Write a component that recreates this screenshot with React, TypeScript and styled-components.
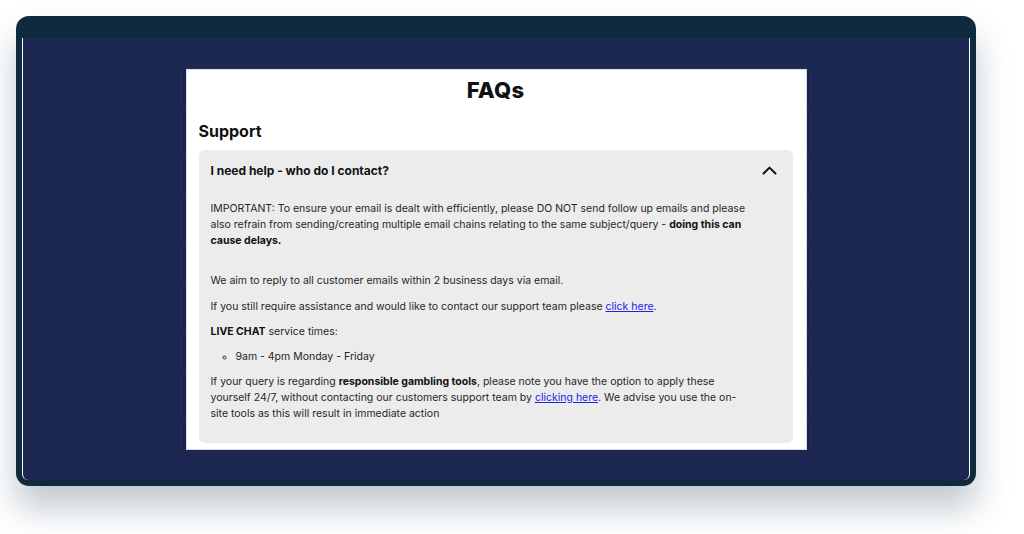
import React from 'react'
import styled, { createGlobalStyle } from 'styled-components'

const GlobalStyle = createGlobalStyle`
  * { box-sizing: border-box; }
  body {
    margin: 0;
    background: #ffffff;
    font-family: Inter, "Noto Sans", sans-serif;
    color: #1c1c1c;
  }
`

const Stage = styled.div`
  width: 1024px;
  height: 534px;
  padding: 16px 48px 48px 16px;
  background: #ffffff;
`

const Window = styled.div`
  height: 470px;
  display: flex;
  flex-direction: column;
  background: #0f2a3f;
  border-radius: 13px;
  padding: 22px 6px 6px 6px;
  box-shadow: 0 22px 34px rgba(30, 60, 85, 0.28);
`

const Screen = styled.div`
  flex: 1;
  position: relative;
  background: #1d2852;
  border-left: 1px solid #ffffff;
  border-right: 1px solid #ffffff;
  border-bottom-left-radius: 6px;
  border-bottom-right-radius: 6px;
  overflow: hidden;
`

const Backdrop = styled.div`
  width: 630px;
  height: 381px;
  margin: 30px auto 0;
  display: flex;
  flex-direction: column;
  gap: 4px;
  overflow: hidden;
`

const BackdropRow = styled.div`
  flex: none;
  height: 40px;
  background: #18224a;
  border: 1px solid #25315e;
  border-radius: 2px;
`

const Overlay = styled.div`
  position: absolute;
  inset: 0;
  display: flex;
  align-items: center;
  justify-content: center;
`

const Modal = styled.div`
  width: 621px;
  height: 381px;
  background: #ffffff;
  border: 1px solid #d9dbe3;
  padding: 6px 13px 0 12px;
  overflow: hidden;
`

const Title = styled.h1`
  margin: 0;
  text-align: center;
  font-size: 22px;
  font-weight: 800;
  line-height: 28px;
  letter-spacing: 0.2px;
  color: #111;
`

const Section = styled.h2`
  margin: 16px 0 0;
  font-size: 16px;
  font-weight: 700;
  line-height: 22px;
  color: #111;
`

const Panel = styled.div`
  margin-top: 8px;
  background: #ececec;
  border-radius: 6px;
  padding: 0 12px 21px;
`

const Question = styled.div`
  height: 42px;
  display: flex;
  align-items: center;
  justify-content: space-between;
  font-size: 12px;
  font-weight: 700;
  color: #111;
  padding-right: 4px;
`

const Answer = styled.div`
  max-width: 540px;
  padding-top: 9px;
  font-size: 10.5px;
  line-height: 16px;
  color: #262626;
`

const Para = styled.p<{ $gap?: number }>`
  margin: 0 0 ${(p) => p.$gap ?? 9}px;
`

const Strong = styled.strong`
  font-weight: 700;
  color: #111;
`

const TextLink = styled.a`
  color: #2323e8;
  text-decoration: underline;
`

const Times = styled.ul`
  margin: 0 0 9px;
  padding-left: 25px;
  list-style: circle;
`

const Chevron = () => (
  <svg width="15" height="9" viewBox="0 0 15 9" fill="none">
    <polyline
      points="1.5,7.5 7.5,1.6 13.5,7.5"
      stroke="#111"
      strokeWidth="2"
      strokeLinecap="round"
      strokeLinejoin="round"
    />
  </svg>
)

export default function App() {
  return (
    <Stage>
      <GlobalStyle />
      <Window>
        <Screen>
          <Backdrop>
            {Array.from({ length: 9 }).map((_, i) => (
              <BackdropRow key={i} />
            ))}
          </Backdrop>
          <Overlay>
            <Modal>
              <Title>FAQs</Title>
              <Section>Support</Section>
              <Panel>
                <Question>
                  <span>I need help - who do I contact?</span>
                  <Chevron />
                </Question>
                <Answer>
                  <Para $gap={24}>
                    IMPORTANT: To ensure your email is dealt with efficiently, please DO NOT send follow up emails and please
                    also refrain from sending/creating multiple email chains relating to the same subject/query -{' '}
                    <Strong>doing this can cause delays.</Strong>
                  </Para>
                  <Para $gap={10}>We aim to reply to all customer emails within 2 business days via email.</Para>
                  <Para>
                    If you still require assistance and would like to contact our support team please{' '}
                    <TextLink href="#">click here</TextLink>.
                  </Para>
                  <Para>
                    <Strong>LIVE CHAT</Strong> service times:
                  </Para>
                  <Times>
                    <li>9am - 4pm Monday - Friday</li>
                  </Times>
                  <Para $gap={0}>
                    If your query is regarding <Strong>responsible gambling tools</Strong>, please note you have the option to
                    apply these yourself 24/7, without contacting our customers support team by{' '}
                    <TextLink href="#">clicking here</TextLink>. We advise you use the on-site tools as this will result in
                    immediate action
                  </Para>
                </Answer>
              </Panel>
            </Modal>
          </Overlay>
        </Screen>
      </Window>
    </Stage>
  )
}
